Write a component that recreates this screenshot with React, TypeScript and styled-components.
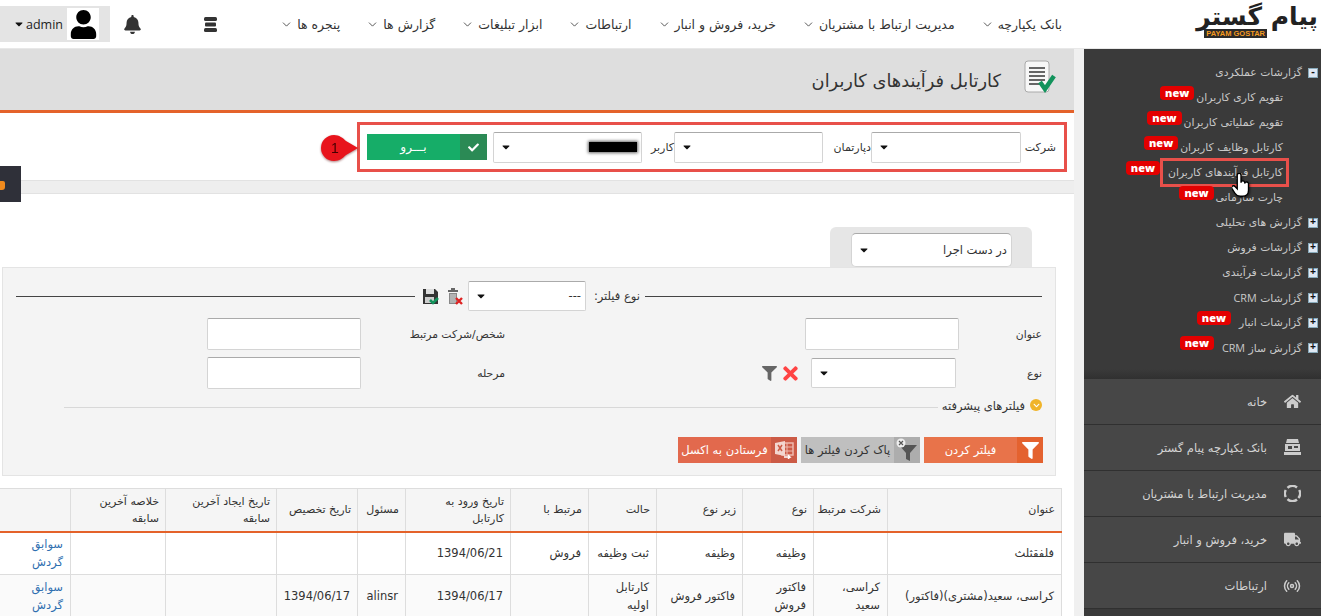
import React from 'react';
import styled, { createGlobalStyle } from 'styled-components';
import { FaBell, FaUser, FaFilter, FaTimes, FaHome, FaTruck, FaCheck, FaCaretDown, FaChevronDown } from 'react-icons/fa';
import { Radio, ChevronDown } from 'lucide-react';

const GlobalStyle = createGlobalStyle`
  html, body {
    margin: 0;
    height: 616px;
    overflow: hidden;
    background: #f0f0f0;
    direction: rtl;
    font-family: "DejaVu Sans", "Noto Sans", sans-serif;
    font-size: 12px;
    color: #333;
  }
  * { box-sizing: border-box; }
`;

const Header = styled.header`
  height: 49px;
  background: #fff;
  display: flex;
  align-items: center;
  border-bottom: 1px solid #e8e8e8;
`;

const Logo = styled.div`
  width: 124px;
  margin: 0 3px 6px 0;
  display: flex;
  flex-direction: column;
  align-items: flex-start;
  line-height: 1;
`;

const LogoText = styled.span`
  font-size: 25px;
  font-weight: bold;
  line-height: 25px;
  color: #222;
  height: 25px;
  letter-spacing: -1px;
`;

const LogoStrip = styled.span`
  direction: ltr;
  background: #2b2b2b;
  color: #f39a1f;
  font-family: "Liberation Sans", sans-serif;
  font-size: 7.5px;
  font-weight: bold;
  line-height: 9px;
  padding: 0 2px;
  margin: 0 51px 0 0;
`;

const Nav = styled.nav`
  margin-right: 132px;
  display: flex;
  align-items: center;
  gap: 26px;
`;

const NavItem = styled.a`
  display: flex;
  align-items: center;
  gap: 4px;
  font-size: 12.5px;
  color: #333;
  white-space: nowrap;
`;

const HeaderLeft = styled.div`
  margin-right: auto;
  display: flex;
  align-items: center;
  height: 36px;
`;

const BarsButton = styled.div`
  display: flex;
  margin-left: 62px;
  color: #333;
`;

const BellButton = styled.div`
  display: flex;
  margin-left: 13px;
  color: #333;
  font-size: 19px;
`;

const UserBox = styled.div`
  direction: ltr;
  width: 110px;
  height: 36px;
  background: #e4e4e4;
  display: flex;
  align-items: center;
  padding-left: 13px;
  gap: 1px;
  font-family: "Open Sans", sans-serif;
  font-size: 12.5px;
  color: #222;
`;

const Avatar = styled.span`
  width: 32px;
  height: 32px;
  margin-left: 3px;
  background: #fff;
  color: #000;
  font-size: 29px;
  display: flex;
  align-items: center;
  justify-content: center;
`;

const Body = styled.div`
  display: flex;
  height: 567px;
`;

const Sidebar = styled.aside`
  width: 237px;
  flex-shrink: 0;
  background: #3a3a3a;
  position: relative;
  color: #c9c9c9;
`;

const Tree = styled.div`
  height: 330px;
  padding-top: 11px;
  background: linear-gradient(#3a3a3a 97%, #303030);
`;

const TreeGroup = styled.div`
  height: 25px;
  padding-right: 3px;
  display: flex;
  align-items: center;
  gap: 6px;
`;

const TreeItem = styled.div`
  height: 25px;
  padding-right: 38px;
  display: flex;
  align-items: center;
`;

const TreeToggle = styled.span`
  width: 10px;
  height: 10px;
  background: #dfe8f4;
  border: 1px solid #8ab;
  color: #111;
  font: bold 10px/8px "Liberation Mono", monospace;
  text-align: center;
  flex-shrink: 0;
`;

const TreeLabel = styled.span<{ $boxed?: boolean }>`
  white-space: nowrap;
  display: inline-block;
  line-height: 17px;
  font-size: 10.8px;
  ${({ $boxed }) => $boxed && 'outline: 3px solid #e8504a; outline-offset: 3px; min-width: 117px;'}
`;

const NewBadge = styled.span<{ $far?: boolean }>`
  background: #e30000;
  color: #fff;
  font-family: "Open Sans", sans-serif;
  font-weight: 800;
  font-size: 11px;
  line-height: 13px;
  height: 14px;
  padding: 0 5px;
  border-radius: 4px;
  margin-right: ${({ $far }) => ($far ? '6px' : '2px')};
  position: relative;
  top: -5px;
`;

const HandCursor = styled.svg`
  position: absolute;
  left: 148px;
  top: 124px;
  filter: drop-shadow(1px 1px 1px rgba(0, 0, 0, 0.5));
`;

const SideMenuRow = styled.a`
  height: 46px;
  background: #474747;
  border-bottom: 1px solid #303030;
  display: flex;
  align-items: center;
  padding-right: 19px;
  gap: 15px;
  color: #d4d4d4;
  font-size: 11.5px;
  white-space: nowrap;
`;

const SideIcon = styled.span`
  width: 20px;
  color: #ccc;
  display: flex;
  justify-content: center;
  font-size: 17px;
`;

const Main = styled.main`
  width: 1084px;
  padding-right: 10px;
  position: relative;
  overflow: hidden;
`;

const TitleBar = styled.div`
  height: 64px;
  background: #dedede;
  border-bottom: 3px solid #e4622a;
  display: flex;
  align-items: center;
  padding: 0 18px 6px 0;
  gap: 23px;
`;

const PageTitle = styled.h1`
  margin: 8px 0 0;
  font-size: 17.8px;
  font-weight: normal;
  color: #333;
`;

const ToolBar = styled.div`
  height: 67px;
  background: #fff;
  padding: 9px 7px 0 0;
`;

const HighlightBox = styled.div`
  width: 710px;
  height: 50px;
  border: 3px solid #e8504a;
  display: flex;
  align-items: center;
  padding-right: 8px;
  position: relative;
`;

const ToolLabel = styled.span<{ $w: number }>`
  width: ${({ $w }) => $w}px;
  margin-left: 4px;
  font-size: 11px;
  white-space: nowrap;
`;

const SelectBox = styled.div<{ $w: number; $h?: number; $radius?: number }>`
  width: ${({ $w }) => $w}px;
  height: ${({ $h }) => $h ?? 31}px;
  background: #fff;
  border: 1px solid #d4d4d4;
  border-top-color: #aaa;
  border-radius: ${({ $radius }) => $radius ?? 2}px;
  display: flex;
  align-items: center;
  justify-content: space-between;
  padding: 0 4px 0 6px;
  font-size: 11.5px;
  flex-shrink: 0;
  color: #333;
`;

const Caret = styled(FaCaretDown)`
  color: #111;
  font-size: 12px;
  flex-shrink: 0;
`;

const GoButton = styled.button`
  width: 120px;
  height: 26px;
  margin-right: 6px;
  border: none;
  padding: 0;
  background: #16ad68;
  color: #fff;
  font: 12px "DejaVu Sans", sans-serif;
  display: flex;
  align-items: center;
`;

const GoIcon = styled.span`
  width: 27px;
  height: 26px;
  background: #2b8a55;
  display: flex;
  align-items: center;
  justify-content: center;
  font-size: 11px;
`;

const GoLabel = styled.span`
  flex: 1;
  text-align: center;
`;

const Redacted = styled.span`
  width: 48px;
  height: 10px;
  background: #000;
  box-shadow: 0 0 3px 1px rgba(0, 0, 0, 0.6);
`;

const Callout = styled.div`
  position: absolute;
  left: -39px;
  top: 10px;
  width: 37px;
  height: 26px;
  filter: drop-shadow(0 1px 1px rgba(90, 0, 0, 0.5));
  color: #400;
  font: 14px/26px "Liberation Sans", sans-serif;
  text-align: center;
`;

const CalloutDigit = styled.span`
  position: absolute;
  left: 10px;
  top: 0;
`;

const SideTab = styled.div`
  position: absolute;
  left: 0;
  top: 117px;
  width: 21px;
  height: 36px;
  background: #2f3039;
  display: flex;
  align-items: center;
  justify-content: flex-end;
`;

const SideTabMark = styled.span`
  width: 5px;
  height: 9px;
  margin-top: 3px;
  background: #f08a1d;
  border-radius: 0 2px 3px 0;
`;

const Band = styled.div`
  height: 14px;
  background: #eeeeee;
  border-top: 1px solid #e2e2e2;
  border-bottom: 1px solid #e2e2e2;
`;

const Content = styled.div`
  background: #fff;
  height: 422px;
  padding-top: 33px;
`;

const StateTab = styled.div`
  width: 202px;
  height: 40px;
  margin-right: 42px;
  background: #e6e6e6;
  border-radius: 6px 6px 0 0;
  padding: 6px 20px 0;
`;

const FilterPanel = styled.section`
  width: 1054px;
  height: 209px;
  margin-right: 18px;
  background: #f4f4f4;
  border: 1px solid #e4e4e4;
  padding: 13px 13px 0;
`;

const Legend = styled.div`
  display: flex;
  align-items: center;
  height: 30px;
`;

const LegendLine = styled.span<{ $w?: number }>`
  height: 1px;
  background: #444;
  width: ${({ $w }) => $w ?? 397}px;
  flex-shrink: 0;
`;

const LegendLabel = styled.span`
  margin: 0 5px 0 10px;
  font-size: 11.5px;
  white-space: nowrap;
  width: 44px;
`;

const LegendIcons = styled.span`
  display: flex;
  align-items: center;
  gap: 8px;
  margin: 0 5px 0 7px;
`;

const FormGrid = styled.div`
  margin-top: 7px;
  display: grid;
  grid-template-columns: 83px 154px 300px 144px 154px;
  grid-auto-rows: 32px;
  row-gap: 7px;
  align-items: center;
`;

const FieldLabel = styled.label`
  font-size: 10.8px;
  white-space: nowrap;
`;

const TextInput = styled.div`
  height: 32px;
  background: #fff;
  border: 1px solid #d4d4d4;
  border-top-color: #aaa;
  border-radius: 2px;
`;

const SelectCell = styled.div`
  padding-right: 3px;
`;

const ActionIcons = styled.div`
  display: flex;
  align-items: center;
  gap: 3px;
  padding-right: 4px;
`;

const AdvancedRow = styled.div`
  margin-top: 9px;
  height: 20px;
  display: flex;
  align-items: flex-start;
`;

const AdvancedIcon = styled.span`
  width: 12px;
  height: 12px;
  margin-top: 1px;
  border-radius: 50%;
  background: #f0b429;
  color: #fff;
  font-size: 7px;
  display: flex;
  align-items: center;
  justify-content: center;
`;

const AdvancedLabel = styled.span`
  margin: 1px 5px 0 4px;
  font-size: 11.5px;
  white-space: nowrap;
`;

const AdvancedLine = styled.span`
  width: 874px;
  height: 1px;
  margin-top: 9px;
  background: #d8d8d8;
`;

const ButtonRow = styled.div`
  margin: 19px -1px 0 0;
  display: flex;
  gap: 4px;
`;

const ActionButton = styled.button<{ $bg: string; $fg: string }>`
  width: 119px;
  height: 26px;
  border: none;
  padding: 0;
  background: ${({ $bg }) => $bg};
  color: ${({ $fg }) => $fg};
  font: 11.5px "DejaVu Sans", sans-serif;
  white-space: nowrap;
  display: flex;
  align-items: center;
`;

const ActionIcon = styled.span<{ $bg: string }>`
  width: 26px;
  height: 26px;
  flex-shrink: 0;
  background: ${({ $bg }) => $bg};
  display: flex;
  align-items: center;
  justify-content: center;
  font-size: 17px;
`;

const ActionText = styled.span`
  flex: 1;
  text-align: center;
`;

const TableWrap = styled.div`
  margin: 12px 12px 0 0;
  width: 1062px;
`;

const Table = styled.table`
  width: 1062px;
  table-layout: fixed;
  border-collapse: collapse;
  font-size: 11.5px;
`;

const Col = styled.col<{ $w: number }>`
  width: ${({ $w }) => $w}px;
`;

const Th = styled.th`
  height: 43px;
  background: #f5f5f5;
  border: 1px solid #ddd;
  border-bottom: 2px solid #e4622a;
  padding: 0 6px 0 2px;
  text-align: right;
  font-size: 11px;
  font-weight: normal;
  line-height: 17px;
  white-space: pre-line;
`;

const Td = styled.td`
  height: 43px;
  border: 1px solid #ddd;
  padding: 0 7px;
  text-align: right;
  line-height: 18px;
`;

const Row = styled.tr<{ $alt?: boolean }>`
  background: ${({ $alt }) => ($alt ? '#fafafa' : '#fff')};
`;

const LinkCell = styled.a`
  color: #2f6fb0;
`;

const Latin = styled.span`
  font-family: "Open Sans", sans-serif;
`;

const BarsIcon = () => (
  <svg width="13" height="15" viewBox="0 0 13 15" fill="currentColor">
    <rect x="0" y="0" width="13" height="4" rx="1.5" />
    <rect x="1" y="5.5" width="11" height="4" rx="1" />
    <rect x="0" y="11" width="13" height="4" rx="1.5" />
  </svg>
);

const DocCheckIcon = () => (
  <svg width="32" height="34" viewBox="0 0 32 34">
    <rect x="1" y="1" width="24" height="31" rx="3" fill="#f7f7f7" stroke="#aaa" />
    <g fill="#666">
      <rect x="5" y="7" width="16" height="2" />
      <rect x="5" y="11" width="16" height="2" />
      <rect x="5" y="15" width="16" height="2" />
      <rect x="5" y="19" width="16" height="2" />
      <rect x="5" y="23" width="12" height="2" />
    </g>
    <path d="M16 22l5 7 9-13" fill="none" stroke="#12935c" strokeWidth="4.5" />
  </svg>
);

const SaveIcon = () => (
  <svg width="17" height="17" viewBox="0 0 17 17">
    <path d="M1 1h12l3 3v12H1z" fill="#333" />
    <rect x="4" y="1" width="8" height="5" fill="#ddd" />
    <rect x="3" y="9" width="9" height="6" fill="#ccc" />
    <path d="M8 12l3 3 5-5" fill="none" stroke="#12935c" strokeWidth="2.6" />
  </svg>
);

const TrashXIcon = () => (
  <svg width="16" height="17" viewBox="0 0 16 17">
    <rect x="1" y="2" width="10" height="2" fill="#666" />
    <rect x="4" y="0" width="4" height="2" fill="#666" />
    <path d="M2 5h8v11H2z" fill="#888" />
    <path d="M4 6v9M6 6v9M8 6v9" stroke="#ddd" />
    <path d="M9 10l6 6M15 10l-6 6" stroke="#d22" strokeWidth="2.4" />
  </svg>
);

const ClearFilterIcon = () => (
  <svg width="24" height="24" viewBox="0 0 24 24">
    <path d="M4 7h18l-7 8v8l-4-2v-6z" fill="#555" />
    <circle cx="6" cy="5" r="4.5" fill="#eee" />
    <path d="M4 3l4 4M8 3l-4 4" stroke="#555" strokeWidth="1.2" />
  </svg>
);

const ExcelIcon = () => (
  <svg width="19" height="18" viewBox="0 0 19 18">
    <rect x="7" y="2" width="11" height="12" fill="none" stroke="#eeb9ad" strokeWidth="1.5" />
    <path d="M7 6h11M7 10h11M12 2v12" stroke="#eeb9ad" />
    <path d="M0 2l10-2v15L0 13z" fill="#f3d6cf" />
    <path d="M3 4l4 6M7 4l-4 6" stroke="#cc5b46" strokeWidth="1.5" />
    <path d="M9 16h6l-2-2M15 16l-2 2" fill="none" stroke="#fff" strokeWidth="1.3" />
  </svg>
);

const StoreIcon = () => (
  <svg width="17" height="17" viewBox="0 0 17 17" fill="#ccc">
    <path d="M3 0h11l1 4H2z" />
    <path d="M1 5h15v7H1zM4 7v3h4V7zM10 7v2h4V7z" fillRule="evenodd" />
    <rect x="0" y="13" width="17" height="3" />
  </svg>
);

const RingIcon = () => (
  <svg width="17" height="17" viewBox="0 0 17 17" fill="none" stroke="#ccc" strokeWidth="2.4">
    <path d="M3.5 2.8A7 7 0 0 1 13 2.5" />
    <path d="M15.2 5a7 7 0 0 1-.8 8" />
    <path d="M13 14.5a7 7 0 0 1-9.5-.3" />
    <path d="M1.8 12a7 7 0 0 1 0-7" />
  </svg>
);

const navItems = ['بانک یکپارچه', 'مدیریت ارتباط با مشتریان', 'خرید، فروش و انبار', 'ارتباطات', 'ابزار تبلیغات', 'گزارش ها', 'پنجره ها'];

const treeRows: { kind: 'open' | 'closed' | 'item'; label: React.ReactNode; badge?: boolean; boxed?: boolean }[] = [
  { kind: 'open', label: 'گزارشات عملکردی' },
  { kind: 'item', label: 'تقویم کاری کاربران', badge: true },
  { kind: 'item', label: 'تقویم عملیاتی کاربران', badge: true },
  { kind: 'item', label: 'کارتابل وظایف کاربران', badge: true },
  { kind: 'item', label: 'کارتابل فرآیندهای کاربران', badge: true, boxed: true },
  { kind: 'item', label: 'چارت سازمانی', badge: true },
  { kind: 'closed', label: 'گزارش های تحلیلی' },
  { kind: 'closed', label: 'گزارشات فروش' },
  { kind: 'closed', label: 'گزارشات فرآیندی' },
  { kind: 'closed', label: <>گزارشات <Latin>CRM</Latin></> },
  { kind: 'closed', label: 'گزارشات انبار', badge: true },
  { kind: 'closed', label: <>گزارش ساز <Latin>CRM</Latin></>, badge: true },
];

const sideMenu: { label: string; icon: React.ReactNode }[] = [
  { label: 'خانه', icon: <FaHome /> },
  { label: 'بانک یکپارچه پیام گستر', icon: <StoreIcon /> },
  { label: 'مدیریت ارتباط با مشتریان', icon: <RingIcon /> },
  { label: 'خرید، فروش و انبار', icon: <FaTruck /> },
  { label: 'ارتباطات', icon: <Radio size={18} /> },
];

const colWidths = [174, 74, 71, 86, 68, 78, 105, 48, 81, 111, 95, 71];

const headers = ['عنوان', 'شرکت مرتبط', 'نوع', 'زیر نوع', 'حالت', 'مرتبط با', 'تاریخ ورود به\nکارتابل', 'مسئول', 'تاریخ تخصیص', 'تاریخ ایجاد آخرین\nسابقه', 'خلاصه آخرین\nسابقه', ''];

const rows = [
  ['فلفقثلث', '', 'وظیفه', 'وظیفه', 'ثبت وظیفه', 'فروش', '1394/06/21', '', '', '', ''],
  ['کراسی، سعید(مشتری)(فاکتور)', 'کراسی، سعید', 'فاکتور فروش', 'فاکتور فروش', 'کارتابل اولیه', '', '1394/06/17', 'alinsr', '1394/06/17', '', ''],
];

const App: React.FC = () => {
  return (
    <>
      <GlobalStyle />
      <Header>
        <Logo>
          <LogoText>پیام گستر</LogoText>
          <LogoStrip>PAYAM GOSTAR</LogoStrip>
        </Logo>
        <Nav>
          {navItems.map((item) => (
            <NavItem key={item}>
              {item}
              <ChevronDown size={13} strokeWidth={1.5} />
            </NavItem>
          ))}
        </Nav>
        <HeaderLeft>
          <BarsButton><BarsIcon /></BarsButton>
          <BellButton><FaBell /></BellButton>
          <UserBox>
            <Caret />
            admin
            <Avatar><FaUser /></Avatar>
          </UserBox>
        </HeaderLeft>
      </Header>
      <Body>
        <Sidebar>
          <Tree>
            {treeRows.map((row, i) =>
              row.kind === 'item' ? (
                <TreeItem key={i}>
                  <TreeLabel $boxed={row.boxed}>{row.label}</TreeLabel>
                  {row.badge && <NewBadge $far={row.boxed}>new</NewBadge>}
                </TreeItem>
              ) : (
                <TreeGroup key={i}>
                  <TreeToggle>{row.kind === 'open' ? '-' : '+'}</TreeToggle>
                  <TreeLabel>{row.label}</TreeLabel>
                  {row.badge && <NewBadge>new</NewBadge>}
                </TreeGroup>
              ),
            )}
          </Tree>
          {sideMenu.map((item) => (
            <SideMenuRow key={item.label}>
              <SideIcon>{item.icon}</SideIcon>
              {item.label}
            </SideMenuRow>
          ))}
          <HandCursor width="18" height="24" viewBox="0 0 24 32">
            <path
              d="M7 3a2.5 2.5 0 0 1 5 0v10a2.5 2.5 0 0 1 5 0v1a2.5 2.5 0 0 1 5 1v8c0 5-3 8-8 8h-3c-3 0-5-1-7-4l-4-6a2.5 2.5 0 0 1 4-3l3 3z"
              fill="#fff"
              stroke="#000"
              strokeWidth="1.8"
            />
          </HandCursor>
        </Sidebar>
        <Main>
          <TitleBar>
            <DocCheckIcon />
            <PageTitle>کارتابل فرآیندهای کاربران</PageTitle>
          </TitleBar>
          <ToolBar>
            <HighlightBox>
              <ToolLabel $w={31}>شرکت</ToolLabel>
              <SelectBox $w={150}><span /><Caret /></SelectBox>
              <ToolLabel $w={44}>دپارتمان</ToolLabel>
              <SelectBox $w={149}><span /><Caret /></SelectBox>
              <ToolLabel $w={28}>کاربر</ToolLabel>
              <SelectBox $w={149}><Redacted /><Caret /></SelectBox>
              <GoButton>
                <GoIcon><FaCheck /></GoIcon>
                <GoLabel>بـــرو</GoLabel>
              </GoButton>
              <Callout>
                <svg width="37" height="26" viewBox="0 0 37 26">
                  <path d="M13 0c5 0 9 3 12 6l12 7-12 7c-3 3-7 6-12 6A13 13 0 0 1 13 0z" fill="#e8141c" />
                </svg>
                <CalloutDigit>1</CalloutDigit>
              </Callout>
            </HighlightBox>
          </ToolBar>
          <Band />
          <Content>
            <StateTab>
              <SelectBox $w={161} $h={34} $radius={5}>
                در دست اجرا
                <Caret />
              </SelectBox>
            </StateTab>
            <FilterPanel>
              <Legend>
                <LegendLine />
                <LegendLabel>نوع فیلتر:</LegendLabel>
                <SelectBox $w={118} $h={30}>
                  ---
                  <Caret />
                </SelectBox>
                <LegendIcons>
                  <TrashXIcon />
                  <SaveIcon />
                </LegendIcons>
                <LegendLine $w={399} />
              </Legend>
              <FormGrid>
                <FieldLabel>عنوان</FieldLabel>
                <TextInput />
                <span />
                <FieldLabel>شخص/شرکت مرتبط</FieldLabel>
                <TextInput />
                <FieldLabel>نوع</FieldLabel>
                <SelectCell>
                  <SelectBox $w={145} $h={30}><span /><Caret /></SelectBox>
                </SelectCell>
                <ActionIcons>
                  <FaTimes color="#f44" size={21} />
                  <FaFilter color="#666" size={15} />
                </ActionIcons>
                <FieldLabel>مرحله</FieldLabel>
                <TextInput />
              </FormGrid>
              <AdvancedRow>
                <AdvancedIcon><FaChevronDown /></AdvancedIcon>
                <AdvancedLabel>فیلترهای پیشرفته</AdvancedLabel>
                <AdvancedLine />
              </AdvancedRow>
              <ButtonRow>
                <ActionButton $bg="#e8734a" $fg="#fff">
                  <ActionIcon $bg="#e4622f"><FaFilter /></ActionIcon>
                  <ActionText>فیلتر کردن</ActionText>
                </ActionButton>
                <ActionButton $bg="#bfbfbf" $fg="#333">
                  <ActionIcon $bg="#adadad"><ClearFilterIcon /></ActionIcon>
                  <ActionText>پاک کردن فیلتر ها</ActionText>
                </ActionButton>
                <ActionButton $bg="#e2694d" $fg="#fff">
                  <ActionIcon $bg="#cc5b46"><ExcelIcon /></ActionIcon>
                  <ActionText>فرستادن به اکسل</ActionText>
                </ActionButton>
              </ButtonRow>
            </FilterPanel>
            <TableWrap>
              <Table>
                <colgroup>
                  {colWidths.map((w, i) => <Col key={i} $w={w} />)}
                </colgroup>
                <thead>
                  <tr>
                    {headers.map((h, i) => <Th key={i}>{h}</Th>)}
                  </tr>
                </thead>
                <tbody>
                  {rows.map((cells, r) => (
                    <Row key={r} $alt={r % 2 === 1}>
                      {cells.map((c, i) => <Td key={i}>{c}</Td>)}
                      <Td><LinkCell>سوابق گردش</LinkCell></Td>
                    </Row>
                  ))}
                </tbody>
              </Table>
            </TableWrap>
          </Content>
          <SideTab><SideTabMark /></SideTab>
        </Main>
      </Body>
    </>
  );
};

export default App;
